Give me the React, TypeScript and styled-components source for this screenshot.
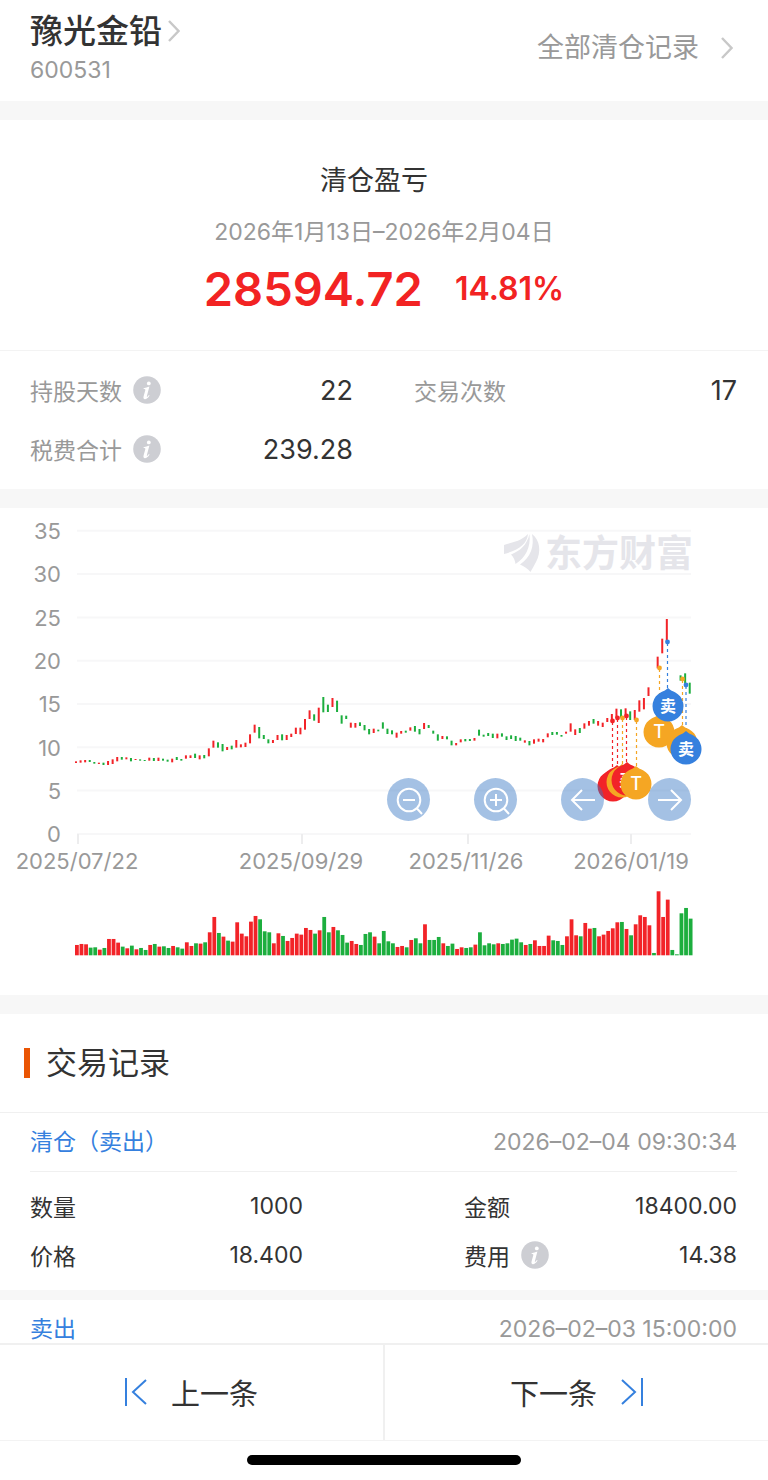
import React from "react";
import styled, { createGlobalStyle } from "styled-components";

const GlobalStyle = createGlobalStyle`
  * { box-sizing: border-box; }
  body {
    margin: 0;
    background: #fff;
    color: #333;
    font-family: Inter, "Noto Sans CJK SC", sans-serif;
    font-size: 24px;
  }
  h1, h2, p, dl, dt, dd { margin: 0; font-weight: 400; }
  button { border: 0; padding: 0; background: none; color: inherit; font: inherit; cursor: pointer; }
`;

const Screen = styled.div`
  display: flex;
  flex-direction: column;
  height: 100vh;
`;

const Content = styled.main`
  flex: 1;
  min-height: 0;
  overflow-y: auto;
  scrollbar-width: none;
`;

const Band = styled.div<{ $size?: number }>`
  height: ${(p) => p.$size ?? 19}px;
  background: #f7f7f7;
`;

const Header = styled.header`
  display: flex;
  align-items: center;
  justify-content: space-between;
  padding: 11px 35px 17px 30px;
`;

const StockLink = styled.a`
  display: flex;
  align-items: center;
  gap: 6px;
  color: #333;
  text-decoration: none;
`;

const StockName = styled.h1`
  font-size: 33px;
  font-weight: 500;
  line-height: 40px;
`;

const StockCode = styled.p`
  margin-top: 5px;
  color: #999;
  font-size: 23px;
  line-height: 28px;
`;

const AllRecords = styled.a`
  display: flex;
  align-items: center;
  gap: 22px;
  color: #999;
  font-size: 27px;
  line-height: 40px;
  text-decoration: none;
`;

const Summary = styled.section`
  display: flex;
  flex-direction: column;
  align-items: center;
  padding: 41px 30px 31px;
  border-bottom: 1px solid #f3f3f3;
`;

const SummaryTitle = styled.h2`
  padding-right: 20px;
  font-size: 27px;
  line-height: 40px;
`;

const Period = styled.p`
  margin-top: 16px;
  color: #999;
  font-size: 23px;
  line-height: 30px;
`;

const Result = styled.div`
  display: flex;
  align-items: center;
  gap: 32px;
  margin-top: 12px;
  color: #f22323;
  font-weight: 600;
  line-height: 60px;
`;

const Amount = styled.span`
  font-size: 47px;
`;

const Percent = styled.span`
  font-size: 32px;
`;

const Facts = styled.dl<{ $gap: number }>`
  display: grid;
  grid-template-columns: 1fr 1fr;
  gap: 19px ${(p) => p.$gap}px;
  padding: 19px 31px 20px 30px;
`;

const Fact = styled.div<{ $height: number }>`
  display: flex;
  align-items: center;
  justify-content: space-between;
  height: ${(p) => p.$height}px;
`;

const FactLabel = styled.dt<{ $muted?: boolean }>`
  display: flex;
  align-items: center;
  gap: 11px;
  color: ${(p) => (p.$muted ? "#999" : "#333")};
  font-size: 23px;
`;

const FactValue = styled.dd<{ $large?: boolean }>`
  font-size: ${(p) => (p.$large ? 27 : 23)}px;
`;

const InfoButton = styled.button`
  width: 28px;
  height: 28px;
  svg { display: block; }
`;

const ChartSection = styled.section`
  position: relative;
`;

const ChartSvg = styled.svg`
  display: block;
  width: 100%;
  height: auto;
`;

const ChartControls = styled.div`
  position: absolute;
  top: 55.5%;
  right: 10%;
  display: flex;
  gap: 44px;
`;

const RoundButton = styled.button`
  width: 43px;
  height: 43px;
  border-radius: 50%;
  background: rgba(53, 117, 195, 0.45);
  svg { display: block; margin: auto; }
`;

const SectionTitle = styled.div`
  display: flex;
  align-items: center;
  gap: 16px;
  height: 99px;
  padding-left: 24px;
  border-bottom: 1px solid #f0f0f0;
  &::before {
    content: "";
    width: 6px;
    height: 30px;
    background: #ea5504;
  }
`;

const SectionHeading = styled.h2`
  font-size: 31px;
  line-height: 40px;
`;

const RecordHead = styled.div`
  display: flex;
  align-items: center;
  justify-content: space-between;
  height: 59px;
  margin: 0 31px 0 30px;
  border-bottom: 1px solid #f0f0f0;
  line-height: 28px;
`;

const RecordKind = styled.span`
  color: #3580de;
  font-size: 23px;
`;

const RecordTime = styled.time`
  color: #999;
  font-size: 23px;
`;

const Footer = styled.footer`
  flex: none;
  border-top: 2px solid #f0f0f0;
  background: #fff;
`;

const Pager = styled.nav`
  display: flex;
  border-bottom: 1px solid #f3f3f3;
`;

const PagerButton = styled.button`
  display: flex;
  flex: 1;
  align-items: center;
  justify-content: center;
  gap: 24px;
  height: 95px;
  padding-bottom: 2px;
  font-size: 29px;
  & + & { border-left: 2px solid #f0f0f0; }
`;

const HomeArea = styled.div`
  display: flex;
  justify-content: center;
  height: 39px;
  padding-top: 14px;
  &::after {
    content: "";
    width: 274px;
    height: 10px;
    border-radius: 5px;
    background: #000;
  }
`;

const RED = "#f22328";
const GREEN = "#1cae3e";
const ORANGE = "#f5a623";
const BLUE = "#3580de";

const STEP = 4.58;

// Upper and lower end of each day's bar, in thirds of a unit below y = 172; "-" marks a day without trade.
const candles: (string | null)[] = (
  "r244,249 r241,248 r240,247 g240,246 g246,251 r248,252 g248,255 r243,255 r238,252 r231,244 " +
  "g231,239 r232,238 g234,244 r237,240 g238,242 g240,243 r233,242 g234,243 r233,243 g236,242 " +
  "g239,245 r236,247 g231,240 g237,242 r226,236 r226,234 g221,234 r226,238 g225,235 r205,229 " +
  "r182,203 g187,203 g192,214 r201,210 g197,208 r180,203 r193,202 r188,201 r163,190 r134,158 " +
  "g141,175 g165,177 g178,190 r180,189 r165,180 g163,181 r165,180 r161,171 r143,162 r143,163 " +
  "r117,149 r91,117 g103,122 r83,129 g51,97 g74,96 r54,81 g62,96 g106,131 g107,117 " +
  "r128,143 r129,143 g127,138 g135,151 g147,163 r146,159 g149,154 g127,146 g146,162 g151,163 " +
  "r158,173 r153,161 g152,158 r142,152 g138,155 g147,163 r129,147 g135,144 g152,161 g163,182 " +
  "r168,177 g169,178 g182,196 r189,196 r178,187 g177,184 g177,183 r174,182 g149,167 g164,170 " +
  "g159,168 g161,174 r161,175 g160,170 g169,180 g166,177 g168,183 g173,182 r181,188 g183,196 " +
  "r178,191 r176,185 r177,187 r160,172 g156,165 g156,164 g165,170 r155,161 r130,155 r148,165 " +
  "g144,159 r130,146 r123,137 g117,131 r123,137 r128,141 r114,126 r102,126 r86,114 g88,113 " +
  "r85,110 g94,120 r90,120 r61,95 r54,88 r22,48 - r-70,-35 r-124,-80 r-183,-113 - - g-14,2 g-20,15 g8,41"
)
  .split(" ")
  .map((c) => (c === "-" ? null : c));

// Height of each volume bar, in thirds of a unit.
const volumes = (
  "r31 r34 r33 g23 g24 r17 g22 r49 r49 r38 g26 r21 g29 r18 g22 g16 r31 g34 r26 g27 g22 r28 g24 g20 " +
  "r39 r28 g36 r35 g39 r69 r115 g67 r56 g44 r41 r99 r65 r57 r101 r118 g108 g72 g69 r36 r66 g58 r43 " +
  "r52 r65 r62 r82 r76 g65 r75 g115 g69 r85 g75 g61 g38 r43 r34 g31 g64 g69 r56 g36 g73 g42 g36 " +
  "r25 r28 g24 r46 g51 g36 r93 g46 g46 g55 r36 g28 g35 r19 r24 g22 g24 r32 g69 g30 g36 g33 r36 " +
  "g34 g36 g47 g50 g39 r31 g34 r45 r28 r28 r59 g45 g43 g31 r57 r108 r60 g57 r97 r80 g82 r57 r62 " +
  "r73 r81 r99 g100 r79 g60 r93 r120 r115 r90 g7 r192 r115 r167 g16 g3 g126 g142 g110"
).split(" ");

const hue = (code: string) => (code[0] === "r" ? RED : GREEN);

const dates = [
  { tick: 78, x: 77, text: "2025/07/22" },
  { tick: 302, x: 301, text: "2025/09/29" },
  { tick: 468, x: 466, text: "2025/11/26" },
  { tick: 631, x: 631, text: "2026/01/19" },
];

const stems = [
  { x: 612.5, from: 214, to: 262, color: RED },
  { x: 617.5, from: 211, to: 262, color: RED },
  { x: 622.5, from: 211, to: 262, color: ORANGE },
  { x: 626.5, from: 209, to: 258, color: RED },
  { x: 636.5, from: 213, to: 260, color: ORANGE },
  { x: 659.5, from: 161, to: 208, color: ORANGE },
  { x: 667.5, from: 135, to: 182, color: BLUE },
  { x: 682.5, from: 172, to: 220, color: ORANGE },
  { x: 686, from: 178, to: 224, color: BLUE },
];

const pins = [
  { x: 613, y: 278, color: RED, text: "" },
  { x: 617, y: 275, color: RED, text: "" },
  { x: 622, y: 274, color: ORANGE, text: "" },
  { x: 627, y: 272, color: RED, text: "买" },
  { x: 636, y: 276, color: ORANGE, text: "T" },
  { x: 659, y: 224, color: ORANGE, text: "T" },
  { x: 682, y: 235, color: ORANGE, text: "" },
  { x: 668, y: 198, color: BLUE, text: "卖" },
  { x: 686, y: 241, color: BLUE, text: "卖" },
];

function Chevron() {
  return (
    <svg width="12" height="22" viewBox="0 0 12 22" fill="none" stroke="#c8c8c8" strokeWidth="2.4" aria-hidden="true">
      <path d="M1 1 L10.5 11 L1 21" />
    </svg>
  );
}

function Info({ label }: { label: string }) {
  return (
    <InfoButton type="button" aria-label={label}>
      <svg width="28" height="28" viewBox="0 0 28 28" aria-hidden="true">
        <circle cx="14" cy="14" r="13.8" fill="#cdced3" />
        <circle cx="15.8" cy="7.4" r="1.9" fill="#fff" />
        <path d="M10.6 12.2 C12.4 11.8 14.4 11.3 16.4 10.6 L13.9 20 C13.6 21.4 14.4 21.1 15.9 19 L16.6 19.5 C14.8 22.4 13 23.4 11.7 23.2 C10.2 23 10.3 21.5 10.7 20 L12.3 14.2 C12.5 13.2 12 13.1 10.6 13.1 Z" fill="#fff" />
      </svg>
    </InfoButton>
  );
}

function PriceChart() {
  return (
    <ChartSvg viewBox="0 0 768 487" role="img" aria-label="股价走势与买卖点">
      <g stroke="#f7f7f8" strokeWidth="2">
        {[0, 1, 2, 3, 4, 5, 6, 7].map((n) => (
          <line key={n} x1="77" x2="691" y1={22.8 + n * 43.3} y2={22.8 + n * 43.3} />
        ))}
      </g>
      <g stroke="#ededee" strokeWidth="2">
        {dates.map((d) => (
          <line key={d.tick} x1={d.tick} x2={d.tick} y1="326" y2="336" />
        ))}
      </g>
      <g fill="#999" fontSize="22" textAnchor="end">
        {[35, 30, 25, 20, 15, 10, 5, 0].map((v, n) => (
          <text key={v} x="61" y={31 + n * 43.3}>{v}</text>
        ))}
      </g>
      <g fill="#999" fontSize="22" textAnchor="middle">
        {dates.map((d) => (
          <text key={d.text} x={d.x} y="361">{d.text}</text>
        ))}
      </g>

      <g fill="#e5e5ea">
        <path d="M504 37 C512 34 520 34 528 26 C527 36 519 42 504 46 Z" />
        <path d="M529.5 26 C531 40 525 50 515.5 56 C515 52 513.5 49 511 46.5 C520 43 527 37 529.5 26 Z" />
        <path d="M532 26 C540 32 541.5 44 536 54 C534 58 532 61 530.5 64 C528 61 524 58 520 56.5 C531 49 534.5 38 532 26 Z" />
        <text x="545" y="59" fontSize="37" fontWeight="700">东方财富</text>
      </g>

      {candles.map((c, i) => {
        if (!c) return null;
        const [top, bottom] = c.slice(1).split(",").map(Number);
        return <rect key={i} x={75 + i * STEP} y={172 + top / 3} width="2" height={(bottom - top) / 3} fill={hue(c)} />;
      })}
      {volumes.map((v, i) => {
        const h = Number(v.slice(1)) / 3;
        return <rect key={i} x={75 + i * STEP} y={447.3 - h} width="3.8" height={h} fill={hue(v)} />;
      })}

      {stems.map((s) => (
        <g key={s.x}>
          <line x1={s.x} x2={s.x} y1={s.from} y2={s.to} stroke={s.color} strokeWidth="1.2" strokeDasharray="3 3" />
          <circle cx={s.x} cy={s.from - 1} r="2.4" fill={s.color} />
        </g>
      ))}
      {pins.map((p) => (
        <g key={`${p.x}-${p.y}`} transform={`translate(${p.x} ${p.y})`}>
          <path d="M0 -18 C2 -16 4 -15 7 -13.8 A15.5 15.5 0 1 1 -7 -13.8 C-4 -15 -2 -16 0 -18 Z" fill={p.color} />
          {p.text && (
            <text y="6" fill="#fff" fontSize={p.text === "T" ? 18 : 16} fontWeight={p.text === "T" ? 500 : 700} textAnchor="middle">
              {p.text}
            </text>
          )}
        </g>
      ))}
    </ChartSvg>
  );
}

const controls = [
  { label: "缩小", path: "M9 15 H21 M23 23.5 L28 29", ring: true },
  { label: "放大", path: "M9 15 H21 M15 9 V21 M23 23.5 L28 29", ring: true },
  { label: "向左", path: "M27 15 H4 M14 5 L4 15 L14 25", ring: false },
  { label: "向右", path: "M3 15 H26 M16 5 L26 15 L16 25", ring: false },
];

export default function App() {
  return (
    <>
      <GlobalStyle />
      <Screen>
        <Content>
          <Header>
            <div>
              <StockLink href="#stock">
                <StockName>豫光金铅</StockName>
                <Chevron />
              </StockLink>
              <StockCode>600531</StockCode>
            </div>
            <AllRecords href="#all">
              全部清仓记录
              <Chevron />
            </AllRecords>
          </Header>
          <Band />
          <Summary>
            <SummaryTitle>清仓盈亏</SummaryTitle>
            <Period>2026年1月13日–2026年2月04日</Period>
            <Result>
              <Amount>28594.72</Amount>
              <Percent>14.81%</Percent>
            </Result>
          </Summary>
          <Facts $gap={61}>
            <Fact $height={40}>
              <FactLabel $muted>持股天数<Info label="持股天数说明" /></FactLabel>
              <FactValue $large>22</FactValue>
            </Fact>
            <Fact $height={40}>
              <FactLabel $muted>交易次数</FactLabel>
              <FactValue $large>17</FactValue>
            </Fact>
            <Fact $height={40}>
              <FactLabel $muted>税费合计<Info label="税费合计说明" /></FactLabel>
              <FactValue $large>239.28</FactValue>
            </Fact>
          </Facts>
          <Band />
          <ChartSection>
            <PriceChart />
            <ChartControls>
              {controls.map((c) => (
                <RoundButton key={c.label} type="button" aria-label={c.label}>
                  <svg width="30" height="30" viewBox="0 0 30 30" fill="none" stroke="#fff" strokeWidth="2" aria-hidden="true">
                    {c.ring && <circle cx="15" cy="15" r="11.3" />}
                    <path d={c.path} />
                  </svg>
                </RoundButton>
              ))}
            </ChartControls>
          </ChartSection>
          <Band />
          <SectionTitle>
            <SectionHeading>交易记录</SectionHeading>
          </SectionTitle>
          <article>
            <RecordHead>
              <RecordKind>清仓（卖出）</RecordKind>
              <RecordTime>2026–02–04 09:30:34</RecordTime>
            </RecordHead>
            <Facts $gap={161}>
              <Fact $height={30}>
                <FactLabel>数量</FactLabel>
                <FactValue>1000</FactValue>
              </Fact>
              <Fact $height={30}>
                <FactLabel>金额</FactLabel>
                <FactValue>18400.00</FactValue>
              </Fact>
              <Fact $height={30}>
                <FactLabel>价格</FactLabel>
                <FactValue>18.400</FactValue>
              </Fact>
              <Fact $height={30}>
                <FactLabel>费用<Info label="费用说明" /></FactLabel>
                <FactValue>14.38</FactValue>
              </Fact>
            </Facts>
          </article>
          <Band $size={10} />
          <article>
            <RecordHead>
              <RecordKind>卖出</RecordKind>
              <RecordTime>2026–02–03 15:00:00</RecordTime>
            </RecordHead>
          </article>
        </Content>
        <Footer>
          <Pager>
            <PagerButton type="button">
              <svg width="22" height="28" viewBox="0 0 22 28" fill="none" stroke={BLUE} strokeWidth="2" aria-hidden="true">
                <path d="M1 0 V28 M21 2 L8 14 L21 26" />
              </svg>
              上一条
            </PagerButton>
            <PagerButton type="button">
              下一条
              <svg width="22" height="28" viewBox="0 0 22 28" fill="none" stroke={BLUE} strokeWidth="2" aria-hidden="true">
                <path d="M21 0 V28 M1 2 L14 14 L1 26" />
              </svg>
            </PagerButton>
          </Pager>
          <HomeArea />
        </Footer>
      </Screen>
    </>
  );
}
